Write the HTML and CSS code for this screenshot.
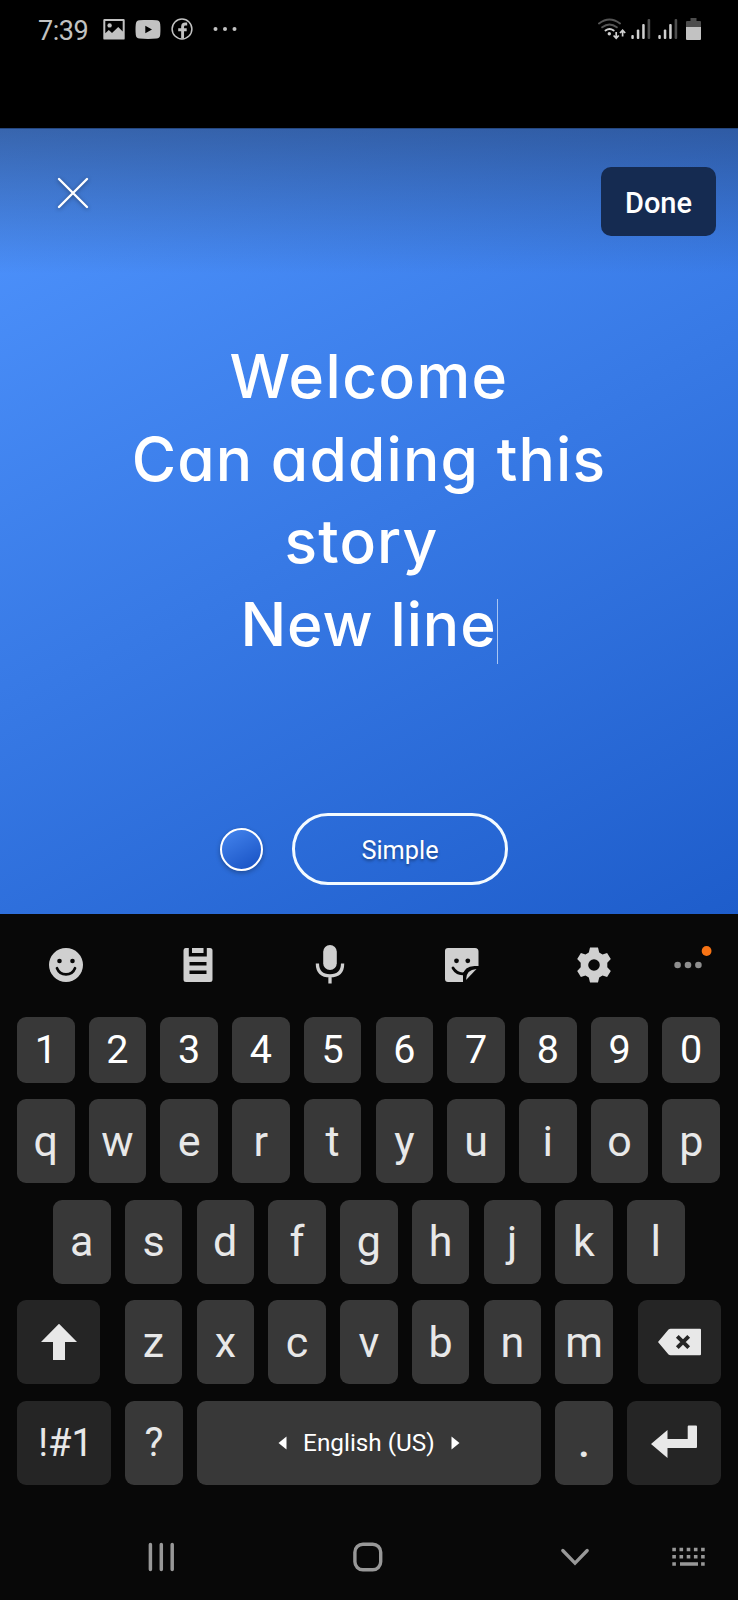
FILE: index.html
```
<!DOCTYPE html>
<html lang="en">
<head>
<meta charset="utf-8">
<title>Story editor</title>
<link rel="stylesheet" href="styles.css">
</head>
<body>
<div class="phone">
  <header class="status">
    <span class="clock">7:39</span>
    <svg class="st-image" width="22" height="21" viewBox="0 0 22 21"><path fill="#c2c2c2" fill-rule="evenodd" d="M1.500 0h19a1.200 1.200 0 0 1 1.200 1.200v18.200a1.200 1.200 0 0 1-1.200 1.200h-19a1.200 1.200 0 0 1-1.200-1.200V1.200A1.200 1.200 0 0 1 1.500 0zM2.300 2v12.300l3.500-3.200 3.200 2.900 6.200-6 4.500 4.400V2z"/><circle cx="6.600" cy="6.400" r="2.200" fill="#c2c2c2"/></svg>
    <svg class="st-tube" width="26" height="19" viewBox="0 0 26 19"><path fill="#c2c2c2" fill-rule="evenodd" d="M4.500.3Q13-.5 21.500.3q3.400.3 3.700 3.700.5 5.500 0 11-.3 3.300-3.700 3.600-8.500.8-17 0Q1.100 18.300.8 15q-.6-5.500 0-11Q1.100.6 4.500.3zM10.300 5.800v7.400L17 9.500z"/></svg>
    <svg class="st-fb" width="22" height="22" viewBox="0 0 22 22"><circle cx="11" cy="11" r="9.900" fill="none" stroke="#c2c2c2" stroke-width="1.500"/><path d="M11.600 20.500V8.700q0-2.700 2.700-2.700h1.900M7.200 11.700h8.500" fill="none" stroke="#c2c2c2" stroke-width="2.900"/></svg>
    <svg class="st-more" width="24" height="6" viewBox="0 0 24 6"><g fill="#c2c2c2"><circle cx="2.500" cy="3" r="2"/><circle cx="12" cy="3" r="2"/><circle cx="21.500" cy="3" r="2"/></g></svg>
    <span class="fill"></span>
    <svg class="st-wifi" width="29" height="23" viewBox="0 0 29 23"><g fill="none" stroke-linecap="round" stroke-width="2"><path stroke="#555" d="M2 5.500Q12.500-2.500 23 5.500M5.200 9.300q7.300-5.500 14.600 0"/><path stroke="#d0d0d0" d="M8.500 12.500q4-3 8.200 0"/></g><circle cx="12.300" cy="15.800" r="1.700" fill="#d0d0d0"/><g fill="none" stroke="#d0d0d0" stroke-width="1.700"><path d="M19.200 14v6M16.600 17.500l2.600 2.700 2.600-2.700M25.600 18.500v-6M23 15l2.600-2.700 2.600 2.700"/></g></svg>
    <svg class="st-sig" width="20" height="21" viewBox="0 0 20 21"><g fill="#d0d0d0"><rect x=".3" y="16" width="2.500" height="4" rx="1"/><rect x="5.800" y="10.500" width="2.500" height="9.500" rx="1"/><rect x="11.200" y="5" width="2.500" height="15" rx="1"/></g><rect x="16.600" y="0" width="2.600" height="20" rx="1" fill="#4d4d4d"/></svg>
    <svg class="st-sig2" width="20" height="21" viewBox="0 0 20 21"><g fill="#d0d0d0"><rect x=".3" y="16" width="2.500" height="4" rx="1"/><rect x="5.800" y="10.500" width="2.500" height="9.500" rx="1"/><rect x="11.200" y="5" width="2.500" height="15" rx="1"/></g><rect x="16.600" y="0" width="2.600" height="20" rx="1" fill="#4d4d4d"/></svg>
    <svg class="st-bat" width="15" height="22" viewBox="0 0 15 22"><path fill="#4d4d4d" d="M4.500 0h6v3H14a1 1 0 0 1 1 1v6H0V4a1 1 0 0 1 1-1h3.500z"/><path fill="#c2c2c2" d="M0 9h15v12a1 1 0 0 1-1 1H1a1 1 0 0 1-1-1z"/></svg>
  </header>

  <main class="story">
    <div class="story-top">
      <svg class="close" width="36" height="36" viewBox="0 0 36 36"><path d="M4 4l28 28M32 4L4 32" fill="none" stroke="#fff" stroke-width="2.400" stroke-linecap="round"/></svg>
      <button class="done">Done</button>
    </div>
    <div class="message">
      <div class="line l1">Welcome</div>
      <div class="line l2">Can adding this</div>
      <div class="line l3">story</div>
      <div class="line l4"><span>New line</span><i class="caret"></i></div>
    </div>
    <div class="tools">
      <span class="swatch"></span>
      <button class="style-pill">Simple</button>
    </div>
  </main>

  <section class="keyboard">
    <div class="toolbar">
      <svg width="36" height="36" viewBox="0 0 36 36"><circle cx="18" cy="18" r="17" fill="#d0d0d0"/><circle cx="11.500" cy="14" r="2.300" fill="#080808"/><circle cx="24.500" cy="14" r="2.300" fill="#080808"/><path d="M9 21.200q2.500 6.200 9 6.200t9-6.200" fill="none" stroke="#080808" stroke-width="2.700" stroke-linecap="round"/></svg>
      <svg width="36" height="36" viewBox="0 0 36 36"><path fill="#d0d0d0" d="M5.500 1h3.300v8.500h18V1H30a2.500 2.500 0 0 1 2.500 2.500v29A2.500 2.500 0 0 1 30 35H6a2.500 2.500 0 0 1-2.500-2.500v-29A2.500 2.500 0 0 1 5.500 1zM12 1h11.500v5H12z"/><path d="M9.500 16.700h17M9.500 25.200h17" stroke="#080808" stroke-width="3.600"/></svg>
      <svg width="36" height="42" viewBox="0 0 36 42"><rect x="11.200" y="1" width="13.600" height="25" rx="6.800" fill="#d0d0d0"/><path d="M5.400 19.500q0 12.300 12.600 12.300t12.600-12.300M18 31.500v8" fill="none" stroke="#d0d0d0" stroke-width="3.300"/></svg>
      <svg width="36" height="36" viewBox="0 0 36 36"><path fill="#d0d0d0" d="M4 1h27a3.500 3.500 0 0 1 3.500 3.500V19h-4Q20 19.500 19 28v7H4a3 3 0 0 1-3-3V4a3 3 0 0 1 3-3z"/><circle cx="12.500" cy="13.800" r="2.400" fill="#080808"/><circle cx="23.800" cy="13.800" r="2.400" fill="#080808"/><path d="M9 21q3.500 5.800 9.500 5.800 1.500 0 2.500-1" fill="none" stroke="#080808" stroke-width="2.800" stroke-linecap="round"/><path fill="#d0d0d0" d="M22 33q0-10.500 10.500-11z"/></svg>
      <svg width="36" height="36" viewBox="0 0 36 36"><path fill="#d0d0d0" fill-rule="evenodd" d="M14 .5h8l1.200 5 3.300 1.900 4.600-1.400 3.700 6-3.500 3.800v4.400l3.500 3.800-3.700 6-4.600-1.400-3.300 1.900-1.200 5h-8l-1.200-5-3.300-1.900L4.900 30l-3.700-6 3.500-3.800v-4.400L1.200 12l3.700-6 4.600 1.400 3.300-1.900zM18 12.200a5.800 5.800 0 1 0 0 11.600 5.800 5.800 0 0 0 0-11.600z"/></svg>
      <svg class="more" width="40" height="42" viewBox="0 0 40 42"><g fill="#8e8e8e"><circle cx="4.600" cy="21" r="3.300"/><circle cx="15" cy="21" r="3.300"/><circle cx="25.400" cy="21" r="3.300"/></g><circle cx="33.600" cy="7" r="4.900" fill="#f77314"/></svg>
    </div>
    <div class="row digits"><b>1</b><b>2</b><b>3</b><b>4</b><b>5</b><b>6</b><b>7</b><b>8</b><b>9</b><b>0</b></div>
    <div class="row"><b>q</b><b>w</b><b>e</b><b>r</b><b>t</b><b>y</b><b>u</b><b>i</b><b>o</b><b>p</b></div>
    <div class="row inset"><b>a</b><b>s</b><b>d</b><b>f</b><b>g</b><b>h</b><b>j</b><b>k</b><b>l</b></div>
    <div class="row wide">
      <b class="fn shift"><svg width="36" height="38" viewBox="0 0 36 38"><path fill="#e8e8e8" d="M18 .7l18 18.200H24V37H12V18.900H0z"/></svg></b>
      <b>z</b><b>x</b><b>c</b><b>v</b><b>b</b><b>n</b><b>m</b>
      <b class="fn del"><svg width="43" height="28" viewBox="0 0 43 28"><path fill="#e8e8e8" d="M0 14L10.500 1.500Q11.500.8 12.500.8H42a1 1 0 0 1 1 1v24.400a1 1 0 0 1-1 1H12.500q-1 0-2-.7z"/><path d="M19.300 8.300l11.400 11.400M30.700 8.300L19.300 19.700" stroke="#252525" stroke-width="3.900"/></svg></b>
    </div>
    <div class="row wide">
      <b class="fn sym">!#1</b><b class="q">?</b>
      <b class="space"><svg width="9" height="14" viewBox="0 0 9 14"><path fill="#fff" d="M8.500.5v13L.5 7z"/></svg><span>English (US)</span><svg width="9" height="14" viewBox="0 0 9 14"><path fill="#fff" d="M.5.500v13l8-6.500z"/></svg></b>
      <b class="dot">.</b>
      <b class="fn enter"><svg width="46" height="34" viewBox="0 0 46 34"><path fill="#e8e8e8" d="M0 19L16.500 5v9H36.700V1.500a1 1 0 0 1 1-1H45a1 1 0 0 1 1 1V22a1 1 0 0 1-1 1H16.500v10z"/></svg></b>
    </div>
  </section>

  <nav class="nav">
    <svg class="n-recent" width="28" height="30" viewBox="0 0 28 30"><path d="M3.400 2.500v25M14.300 2.500v25M25.200 2.500v25" stroke="#989898" stroke-width="3.500" stroke-linecap="round"/></svg>
    <svg class="n-home" width="30" height="30" viewBox="0 0 30 30"><rect x="1.900" y="2.200" width="25.800" height="25.600" rx="8" fill="none" stroke="#989898" stroke-width="3.400"/></svg>
    <svg class="n-down" width="30" height="20" viewBox="0 0 30 20"><path d="M2.800 3.500L15 16.200 27.200 3.500" fill="none" stroke="#989898" stroke-width="3.300" stroke-linecap="round"/></svg>
    <svg class="n-kb" width="34" height="20" viewBox="0 0 34 20"><g stroke="#989898" fill="none"><path stroke-width="3.600" stroke-dasharray="3.600 3.600" d="M.3 2.500h33M.3 9.800h33"/><path stroke-width="3.600" d="M.3 17h3.600M8 17h18M29.100 17h3.600"/></g></svg>
  </nav>
</div>
</body>
</html>
```
FILE: styles.css
```
* { box-sizing: border-box; }
body { margin: 0; background: #000; font-family: Roboto, "Liberation Sans", sans-serif; }
.phone { width: 738px; height: 1600px; display: flex; flex-direction: column; overflow: hidden; background: #080808; }
svg { display: block; flex: none; }
button { font-family: inherit; padding: 0; cursor: pointer; }

.status { height: 128px; flex: none; background: #000; display: flex; align-items: flex-start; padding: 18px 37px 0 38px; }
.clock { width: 64px; padding-top: 1px; font-size: 27px; line-height: 25px; color: #c2c2c2; letter-spacing: -0.5px; }
.st-image { margin: 1px 10px 0 1px; }
.st-tube { margin: 2px 10px 0 0; }
.st-fb { margin-right: 20px; }
.st-more { margin-top: 8px; }
.fill { flex: 1; }
.st-wifi { margin-right: 5px; }
.st-sig { margin: 1px 7px 0 0; }
.st-sig2 { margin: 1px 8px 0 0; }

.story { height: 786px; flex: none; display: flex; flex-direction: column; background: linear-gradient(rgba(25, 40, 70, .44), rgba(25, 40, 70, 0) 145px), linear-gradient(153deg, #5095ff, #1e5dcb); border-top: 1px solid #25477f; }
.story-top { height: 194px; flex: none; display: flex; justify-content: space-between; padding: 38px 22px 0 55px; }
.close { margin-top: 8px; filter: drop-shadow(0 1px 2px rgba(0, 0, 0, .4)); }
.done { width: 115px; height: 69px; border: 0; border-radius: 10px; background: #152b51; color: #fff; font-size: 29px; font-weight: 500; padding-top: 3px; }
.message { height: 480px; flex: none; padding-top: 12px; text-align: center; color: #fff; font-family: Inter, sans-serif; font-size: 60.5px; font-weight: 500; font-feature-settings: "cv11"; }
.line { height: 82.6px; line-height: 82.6px; white-space: nowrap; }
.l1 { letter-spacing: 1.4px; }
.l2 { letter-spacing: 1.2px; }
.l3 { letter-spacing: 1.1px; padding-right: 15px; }
.l4 { letter-spacing: .9px; display: flex; justify-content: center; align-items: center; }
.caret { width: 1px; height: 65px; margin-top: 14px; background: #a9c6f3; }
.tools { display: flex; align-items: center; gap: 29px; padding: 10px 0 0 220px; }
.swatch { width: 43px; height: 43px; border: 2px solid #fff; border-radius: 50%; background: linear-gradient(150deg, #4585ee, #1650c2); box-shadow: 0 2px 5px rgba(0, 0, 0, .3); }
.style-pill { width: 216px; height: 72px; border: 3px solid #f4fbff; border-radius: 36px; background: none; color: #fff; font-size: 25.3px; text-shadow: 0 2px 3px rgba(0, 0, 0, .35); padding-top: 2px; }

.keyboard { flex: none; height: 586px; }
.toolbar { height: 103px; display: flex; align-items: center; padding: 0 0 2px 48px; gap: 96px; }
.toolbar .more { margin-left: -35px; }
.row { display: flex; justify-content: space-between; height: 84.3px; margin: 0 18px 16.200px 17px; }
.row b { width: 57.500px; border-radius: 9px; background: #383838; color: #e8e8e8; font-weight: 400; font-size: 43px; display: flex; align-items: center; justify-content: center; line-height: 1; }
.digits { height: 66px; }
.row.digits b { font-size: 39.5px; color: #fff; }
.inset { margin: 0 53.500px 16.200px 53px; }
.wide { margin-right: 17.200px; }
.row .fn { background: #252525; }
.row .shift, .row .del { width: 83px; }
.row .shift { margin-right: 10.500px; }
.row .del { margin-left: 10.500px; }
.row .sym, .row .enter { width: 94px; }
.row .sym { font-size: 38px; padding-left: 3px; }
.row .q { font-size: 40px; }
.row .dot { font-weight: 500; }
.row .space { width: 344px; font-size: 24.3px; color: #fff; gap: 16px; }
.enter svg { margin-top: -1px; }

.nav { flex: 1; display: flex; align-items: center; padding: 14px 0 0 147px; }
.n-home { margin-left: 178px; }
.n-down { margin-left: 177px; }
.n-kb { margin-left: 82px; }
```
